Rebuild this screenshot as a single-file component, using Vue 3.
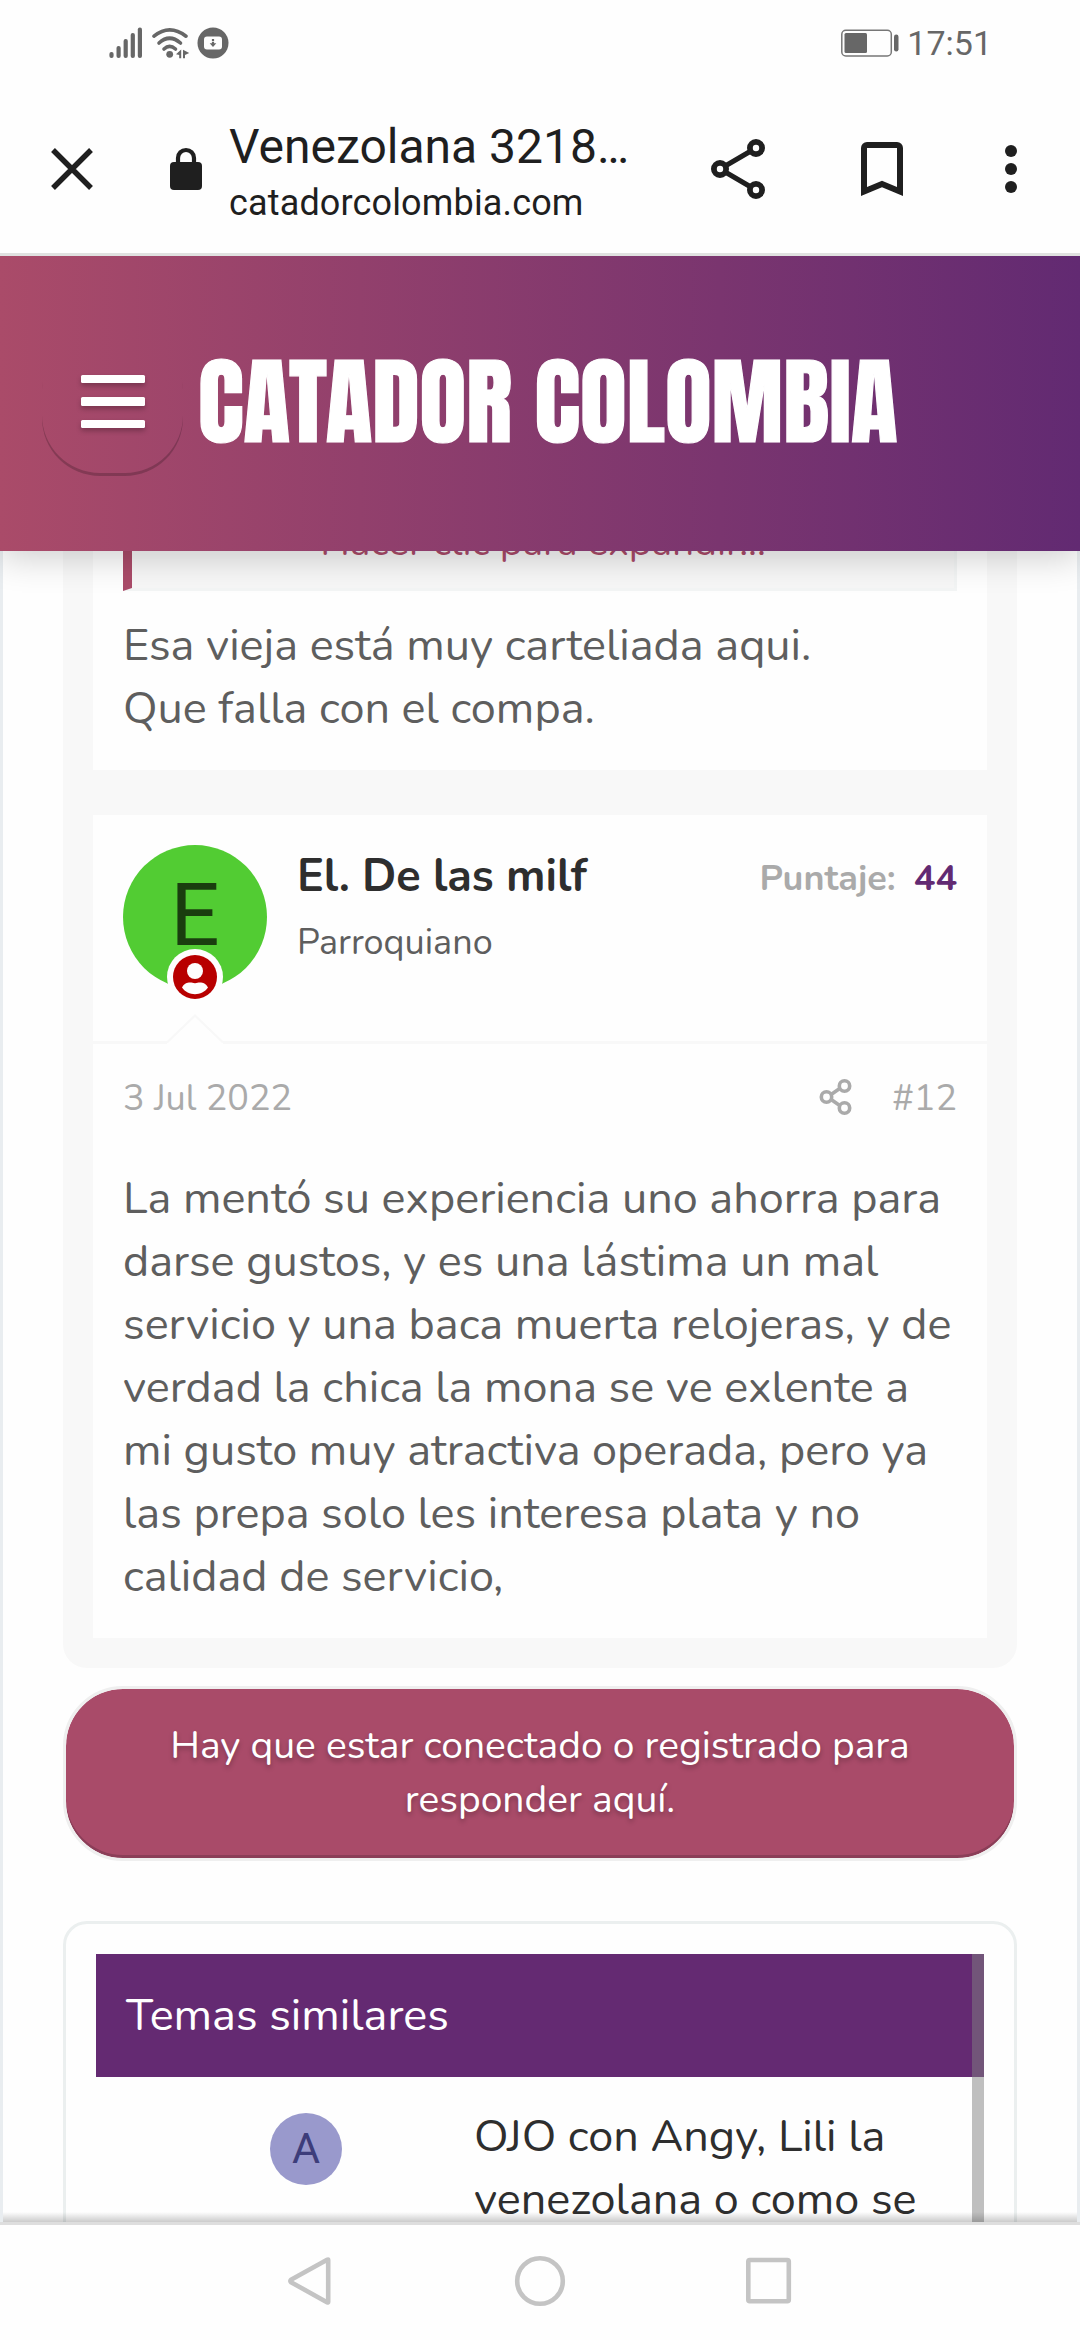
<script setup>
const postLines = [
  'La mentó su experiencia uno ahorra para',
  'darse gustos, y es una lástima un mal',
  'servicio y una baca muerta relojeras, y de',
  'verdad la chica la mona se ve exlente a',
  'mi gusto muy atractiva operada, pero ya',
  'las prepa solo les interesa plata y no',
  'calidad de servicio,',
]
const bars = [6, 12, 19, 25, 30.5]
</script>

<template>
  <div class="screen">
    <div class="status">
      <svg class="signal" viewBox="0 0 34 32" width="34" height="32">
        <rect v-for="(h, i) in bars" :key="i" :x="i * 7.1 + 0.4" :y="31 - h" width="4.2" :height="h" rx="2" fill="#676767" />
      </svg>
      <svg class="wifi" viewBox="0 0 40 32" width="40" height="32">
        <g fill="none" stroke="#676767" stroke-width="3.6" stroke-linecap="round">
          <path d="M3 9.2Q18.500-3.400 35 9.200" />
          <path d="M8 16Q18.500 6.500 29.500 16" />
          <path d="M13 22Q18.500 16.800 24.500 22" />
        </g>
        <circle cx="18.700" cy="27.300" r="3.400" fill="#676767" />
        <path d="M25 27.200l5.200-4.800v8.800h-2v-3.200zM32 22.800l6.200 3.200-4.200 2v3.200h-2z" fill="#676767" />
      </svg>
      <svg class="download" viewBox="0 0 32 32" width="32" height="32">
        <circle cx="16" cy="16" r="15.500" fill="#676767" />
        <rect x="7" y="9.500" width="18" height="13" rx="3" fill="#fefefe" />
        <path d="M14.900 12h2.200v2h-2.200zM14.900 14.800h2.200v1.400h2.200L16 20l-3.300-3.800h2.200z" fill="#676767" />
      </svg>
      <span class="grow"></span>
      <svg class="battery" viewBox="0 0 60 30" width="60" height="30">
        <rect x="1.800" y="2.300" width="49.500" height="25.600" rx="4" fill="none" stroke="#777" stroke-width="1.500" />
        <rect x="4.500" y="5" width="22.500" height="20" rx="1.500" fill="#676767" />
        <rect x="54" y="6.500" width="4.500" height="17" rx="2.200" fill="#676767" />
      </svg>
      <span class="clock">17:51</span>
    </div>

    <div class="toolbar">
      <svg class="close" viewBox="0 0 44 44" width="44" height="44">
        <path d="M3 3L41 41M41 3L3 41" stroke="#1f1f1f" stroke-width="5.400" />
      </svg>
      <svg class="lock" viewBox="0 0 32 44" width="32" height="44">
        <rect x="0" y="15" width="32" height="28" rx="4" fill="#1f1f1f" />
        <path d="M8 16V11a8 8 0 0 1 16 0V16" fill="none" stroke="#1f1f1f" stroke-width="4.200" />
      </svg>
      <div class="titles">
        <div class="title">Venezolana 3218…</div>
        <div class="url">catadorcolombia.com</div>
      </div>
      <svg class="share" viewBox="0 0 56 62" width="56" height="62">
        <g fill="none" stroke="#1f1f1f">
          <path d="M46 10L10 31L46 52" stroke-width="5" />
          <g stroke-width="5.800" fill="#fefefe">
            <circle cx="46" cy="10" r="6.100" />
            <circle cx="10" cy="31" r="6.100" />
            <circle cx="46" cy="52" r="6.100" />
          </g>
        </g>
      </svg>
      <svg class="bookmark" viewBox="0 0 42 54" width="42" height="54">
        <path d="M3 49.500V6a3 3 0 0 1 3-3H36a3 3 0 0 1 3 3V49.500L21 42z" fill="none" stroke="#1f1f1f" stroke-width="6" />
      </svg>
      <svg class="dots" viewBox="0 0 12 48" width="12" height="48">
        <circle v-for="y in [6, 24, 42]" :key="y" cx="6" :cy="y" r="6" fill="#1f1f1f" />
      </svg>
    </div>

    <header class="site-head">
      <button class="menu" aria-label="Menú"><i></i><i></i><i></i></button>
      <div class="logo">CATADOR COLOMBIA</div>
    </header>

    <main class="page">
      <section class="thread">
        <article class="post first">
          <blockquote class="quote"><span>Hacer clic para expandir...</span></blockquote>
          <p class="text">Esa vieja está muy carteliada aqui.<br />Que falla con el compa.</p>
        </article>
        <article class="post second">
          <div class="user">
            <div class="avatar">
              <span>E</span>
              <svg class="badge" viewBox="0 0 56 56" width="56" height="56">
                <circle cx="28" cy="28" r="28" fill="#fefefe" />
                <circle cx="28" cy="28" r="22" fill="#b80000" />
                <circle cx="28" cy="22" r="8" fill="#fefefe" />
                <path d="M15 38.500C17 34.500 20 33.500 23 33.500C25 33.500 26 34.200 28 34.200S31 33.500 33 33.500C36 33.500 39 34.500 41 38.500C38 43 33 45.200 28 45.200S18 43 15 38.500z" fill="#fefefe" />
              </svg>
            </div>
            <div class="who">
              <div class="name">El. De las milf</div>
              <div class="role">Parroquiano</div>
            </div>
            <div class="score">Puntaje:<b>44</b></div>
            <svg class="notch" viewBox="0 0 56 30" width="56" height="30">
              <path d="M0 30V27L28 1L56 27V30z" fill="#fefefe" />
              <path d="M0 28.500L28 1.500L56 28.500" fill="none" stroke="#f8f8f8" stroke-width="2.200" />
            </svg>
          </div>
          <div class="meta">
            <span class="grow">3 Jul 2022</span>
            <svg viewBox="0 0 34 38" width="34" height="38">
              <g fill="none" stroke="#aaa" stroke-width="3.600">
                <path d="M12.500 16.200L20 11M12.500 21.800L20 27" />
                <circle cx="25.500" cy="8" r="5.200" />
                <circle cx="7.500" cy="19" r="5.200" />
                <circle cx="25.500" cy="30" r="5.200" />
              </g>
            </svg>
            <span>#12</span>
          </div>
          <p class="text body"><span v-for="l in postLines" :key="l">{{ l }}</span></p>
        </article>
      </section>

      <a class="login">Hay que estar conectado o registrado para<br />responder aquí.</a>

      <section class="related">
        <div class="scroller">
          <h3>Temas similares</h3>
          <div class="item">
            <div class="mini">A</div>
            <div class="item-title">OJO con Angy, Lili la<br />venezolana o como se</div>
          </div>
          <div class="thumb"></div>
        </div>
      </section>
    </main>

    <nav class="nav">
      <svg viewBox="0 0 506 52" width="506" height="52">
        <g fill="none" stroke="#c4c4c4" stroke-width="4.600" stroke-linejoin="round">
          <path d="M40.600 4.600Q41.200 4.200 41.200 5V47Q41.200 47.800 40.400 47.400L4 27.200Q2.600 26 4 24.800z" />
          <circle cx="253" cy="26" r="22.800" />
          <rect x="461.300" y="5" width="40.500" height="41.200" rx="1.500" />
        </g>
      </svg>
    </nav>
  </div>
</template>

<style>
body {
  margin: 0;
  background: #fefefe;
}
</style>

<style scoped>
.screen {
  width: 1080px;
  height: 2340px;
  overflow: hidden;
  display: flex;
  flex-direction: column;
  background: #fefefe;
  font-family: Nunito, Lato, "Noto Sans", sans-serif;
  color: #5e5e5e;
}
.grow {
  flex: 1;
}
svg {
  display: block;
  flex: none;
}
.status {
  height: 86px;
  box-sizing: border-box;
  padding: 0 88px 0 109px;
  display: flex;
  align-items: center;
  flex: none;
}
.wifi {
  margin-left: 8px;
}
.download {
  margin-left: 6px;
}
.clock {
  font: 34px/40px Roboto, sans-serif;
  color: #676767;
  margin-left: 7px;
}
.toolbar {
  height: 170px;
  box-sizing: border-box;
  flex: none;
  position: relative;
  z-index: 3;
  background: #fefefe;
  border-bottom: 3px solid #e0e1e0;
  padding: 0 63px 2px 50px;
  display: flex;
  align-items: center;
  color: #1f1f1f;
  font-family: Roboto, sans-serif;
}
.lock {
  margin-left: 76px;
}
.titles {
  margin-left: 27px;
  padding-top: 14px;
  width: 482px;
  white-space: nowrap;
}
.title {
  font-size: 48px;
  line-height: 56px;
  margin-top: -1px;
}
.url {
  font-size: 36px;
  line-height: 56px;
  letter-spacing: 0.15px;
}
.bookmark {
  margin-left: 95px;
}
.dots {
  margin-left: 102px;
}
.site-head {
  height: 295px;
  flex: none;
  position: relative;
  z-index: 2;
  background: linear-gradient(90deg, #aa4b69, #622a72);
  box-shadow: 0 6px 34px rgba(0, 0, 0, 0.2);
  display: flex;
  align-items: center;
}
.menu {
  width: 141px;
  height: 141px;
  margin: 4px 0 0 42px;
  padding: 0 0 8px;
  border: 0;
  border-radius: 58px;
  background: none;
  box-shadow: inset 0 -3px rgba(0, 0, 0, 0.2);
  display: flex;
  flex-direction: column;
  align-items: center;
  justify-content: center;
  gap: 14px;
}
.menu i {
  width: 64px;
  height: 8.500px;
  border-radius: 1.500px;
  background: #fff;
  box-shadow: 0 3px 5px rgba(0, 0, 0, 0.25);
}
.logo {
  margin-left: 15px;
  padding-bottom: 4px;
  font-family: Anton, "Open Sans", sans-serif;
  font-weight: 400;
  font-size: 96px;
  line-height: 144px;
  color: #fff;
  -webkit-text-stroke: 1.200px #fff;
  white-space: nowrap;
}
.page {
  flex: none;
  height: 1671px;
  overflow: hidden;
  position: relative;
  padding: 0 60px;
  border: solid #e9edf0;
  border-width: 0 3px;
  box-sizing: border-box;
}
.page::after {
  content: "";
  position: absolute;
  left: -3px;
  right: -3px;
  bottom: 0;
  height: 10px;
  background: linear-gradient(transparent, rgba(0, 0, 0, 0.2));
}
.thread {
  background: #f8f8f8;
  border-radius: 0 0 24px 24px;
  padding: 0 30px 30px;
}
.post {
  background: #fefefe;
  box-sizing: border-box;
}
.first {
  height: 219px;
  padding: 0 30px;
}
.quote {
  margin: 0;
  height: 40px;
  box-sizing: border-box;
  overflow: hidden;
  background: #f7f7f7;
  border: solid #f3f5f5;
  border-width: 0 3px 3px 9px;
  border-left-color: #aa4b69;
  text-align: center;
  font-size: 39px;
  line-height: 63px;
  color: #aa4b69;
}
.quote span {
  display: block;
  margin-top: -40px;
}
.text {
  margin: 0;
  padding-top: 23px;
  font-size: 45px;
  line-height: 63px;
  white-space: nowrap;
}
.body {
  padding: 44px 30px 30px;
}
.body span {
  display: block;
}
.second {
  margin-top: 45px;
  height: 823px;
}
.user {
  position: relative;
  height: 229px;
  box-sizing: border-box;
  border-bottom: 3px solid #f8f8f8;
  padding: 30px;
  display: flex;
}
.avatar {
  position: relative;
  width: 144px;
  height: 144px;
  border-radius: 50%;
  background: #52cc33;
  color: #1a3d0f;
  font: 87px/140px Roboto, sans-serif;
  text-align: center;
}
.badge {
  position: absolute;
  left: 44px;
  top: 104px;
}
.who {
  margin-left: 30px;
  flex: 1;
}
.name {
  font-size: 45px;
  line-height: 63px;
  font-weight: 700;
  color: #2e2e2e;
}
.role {
  margin-top: 10px;
  font-size: 36px;
  line-height: 50px;
}
.score {
  margin-top: 9px;
  font-size: 36px;
  line-height: 50px;
  font-weight: 700;
  color: #aaa;
}
.score b {
  margin-left: 18px;
  font-weight: 700;
  color: #622a72;
}
.notch {
  position: absolute;
  left: 74px;
  top: 199px;
}
.meta {
  display: flex;
  align-items: center;
  padding: 30px 30px 0;
  margin-bottom: -1px;
  font-size: 36px;
  line-height: 50px;
  color: #aaa;
}
.meta svg {
  margin: 0 39px 4px 0;
}
.login {
  display: block;
  box-sizing: border-box;
  height: 175px;
  margin-top: 18px;
  padding-top: 30px;
  border: 3px solid #efefef;
  border-radius: 60px;
  background: #a94b69;
  background-clip: padding-box;
  box-shadow: inset 0 -3px #8b3e58;
  text-align: center;
  font-size: 39px;
  line-height: 54px;
  color: #fff;
  text-shadow: 0 3px 5px rgba(0, 0, 0, 0.28);
}
.related {
  margin-top: 60px;
  height: 400px;
  border: 3px solid #ebefef;
  border-radius: 24px;
  padding: 30px;
}
.scroller {
  position: relative;
  height: 400px;
}
h3 {
  margin: 0;
  padding: 30px 30px 30px;
  background: #642a72;
  color: #fff;
  font-weight: 400;
  font-size: 45px;
  line-height: 63px;
}
.item {
  display: flex;
  padding-top: 28px;
}
.mini {
  width: 72px;
  height: 72px;
  margin: 8px 0 0 174px;
  border-radius: 50%;
  background: #9999cc;
  color: #3d3d7a;
  font: 43px/70px Roboto, sans-serif;
  text-align: center;
}
.item-title {
  margin-left: 132px;
  font-size: 45px;
  line-height: 63px;
  color: #2e2e2e;
  white-space: nowrap;
}
.thumb {
  position: absolute;
  top: 0;
  right: 0;
  width: 12px;
  height: 400px;
  background: rgba(128, 128, 128, 0.5);
}
.nav {
  flex: 1;
  border-top: 3px solid #dedede;
  display: flex;
  justify-content: center;
}
.nav svg {
  margin-top: 30px;
}
</style>
